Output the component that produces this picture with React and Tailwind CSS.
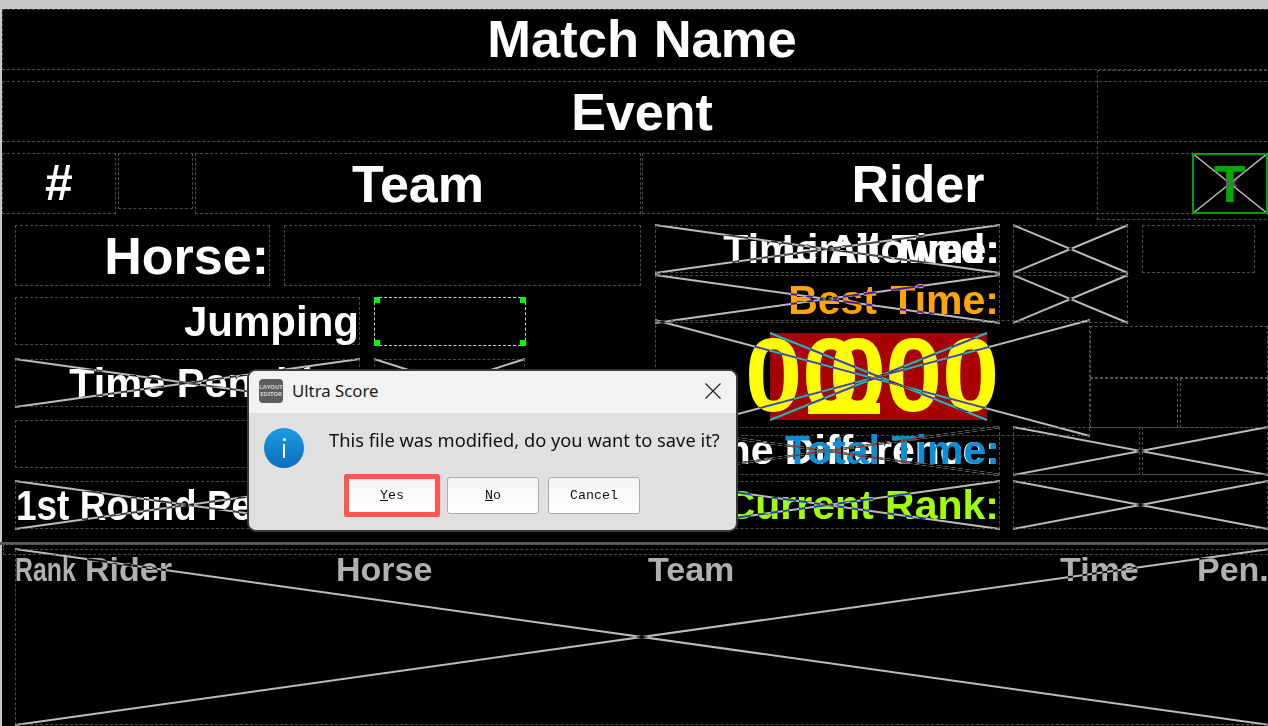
import React from "react";

const B = "font-['Liberation_Sans',Arial,sans-serif] font-bold";

const Cell = ({ className = "", children }) => (
  <div className={`absolute flex items-center whitespace-pre border border-dashed border-[#4a4a4a] ${B} ${className}`}>
    {children}
  </div>
);

const Label = ({ className = "", children }) => (
  <div className={`absolute flex items-center justify-end whitespace-pre ${B} ${className}`}>{children}</div>
);

/* Each diagonal blends on its own, so where the two meet they cancel out, as in an XOR-drawn placeholder. */
const Cross = ({ className = "", stroke = "#bcbcbc", w = 2 }) => (
  <>
    <svg className={`absolute overflow-visible mix-blend-difference ${className}`} aria-hidden="true">
      <line x1="0" y1="0" x2="100%" y2="100%" stroke={stroke} strokeWidth={w} />
    </svg>
    <svg className={`absolute overflow-visible mix-blend-difference ${className}`} aria-hidden="true">
      <line x1="0" y1="100%" x2="100%" y2="0" stroke={stroke} strokeWidth={w} />
    </svg>
  </>
);

const Handle = ({ className = "" }) => <div className={`absolute size-[6px] bg-[#00ff00] ${className}`} />;

const Digit = ({ className = "", children }) => (
  <div className={`absolute top-[317px] text-[103px] leading-[118px] text-[#ffff00] ${B} ${className}`}>{children}</div>
);

const Head = ({ className = "", children }) => (
  <div className={`absolute top-[549px] text-[34px] leading-[40px] text-[#b0b0b0] ${B} ${className}`}>{children}</div>
);

const Btn = ({ className = "", children }) => (
  <button className={`flex items-center justify-center rounded-[3px] border border-[#ababab] bg-gradient-to-b from-[#f4f4f4] to-white text-[13.3px] text-[#111] font-['Liberation_Mono',monospace] ${className}`}>
    {children}
  </button>
);

export default function App() {
  return (
    <div className="relative h-[726px] w-[1268px] overflow-hidden bg-black">
      <div className="h-[9px] w-full bg-[#c8c8c8]" />
      <div className="absolute bottom-0 left-0 top-[9px] w-[2px] bg-[#c8c8c8]" />

      {/* header cells */}
      <Cell className="left-[2px] top-[9px] h-[61px] w-[1280px] justify-center text-[52.5px] text-white">Match Name</Cell>
      <Cell className="left-[2px] top-[81px] h-[61px] w-[1280px] justify-center text-[52px] text-white">Event</Cell>
      <Cell className="left-[1097px] top-[70px] h-[150px] w-[190px]" />
      <Cell className="left-[2px] top-[153px] h-[61px] w-[114px] justify-center text-[50px] text-white">#</Cell>
      <Cell className="left-[118px] top-[153px] h-[56px] w-[75px]" />
      <Cell className="left-[195px] top-[153px] h-[61px] w-[446px] justify-center text-[52px] text-white">Team</Cell>
      <Cell className="left-[642px] top-[153px] h-[61px] w-[552px] justify-center text-[52px] text-white">Rider</Cell>
      <Cross className="left-[1192px] top-[153px] h-[61px] w-[76px]" w={1.5} />
      <div className={`absolute left-[1192px] top-[153px] flex h-[61px] w-[76px] items-center justify-center border-2 border-[#00a000] text-[52px] text-[#00a800] ${B}`}>T</div>
      <svg className="absolute left-[1225px] top-[177px] size-[12px]" viewBox="0 0 12 12" aria-hidden="true">
        <path d="M0.5 2.5 L3 5 L3 7 L0.5 9.5 M11.5 2.5 L9 5 L9 7 L11.5 9.5" stroke="#c81cc8" strokeWidth="1.5" fill="none" />
      </svg>

      {/* left column */}
      <Cell className="left-[15px] top-[225px] h-[61px] w-[255px] justify-end text-[52px] text-white">Horse:</Cell>
      <Cell className="left-[284px] top-[225px] h-[61px] w-[357px]" />
      <Cell className="left-[15px] top-[297px] h-[48px] w-[345px] justify-end text-[42px] text-white">Jumping</Cell>
      <div className="absolute left-[374px] top-[297px] h-[49px] w-[152px] border border-dashed border-[#d0d0d0]">
        <Handle className="-left-px -top-px" />
        <Handle className="-right-px -top-px" />
        <Handle className="-bottom-px -left-px" />
        <Handle className="-bottom-px -right-px" />
      </div>
      <Cell className="left-[15px] top-[359px] h-[48px] w-[345px] justify-end text-[41.5px] text-white">Time Penalties</Cell>
      <Cell className="left-[374px] top-[359px] h-[48px] w-[151px]" />
      <Cell className="left-[15px] top-[420px] h-[48px] w-[345px]" />
      <Cell className="left-[374px] top-[420px] h-[48px] w-[151px]" />
      <Cell className="left-[15px] top-[481px] h-[48px] w-[345px] text-[42px] text-white">
        <span className="origin-left scale-x-[0.88]">1st Round Penalties</span>
      </Cell>

      {/* right column */}
      <Cell className="left-[655px] top-[225px] h-[48px] w-[345px] justify-end pt-[2px] text-[41px] text-white">Time Allowed:</Cell>
      <Label className="left-[655px] top-[225px] h-[48px] w-[345px] pt-[2px] text-[41px] text-white">Limit Time:</Label>
      <Cell className="left-[655px] top-[275px] h-[48px] w-[345px] justify-end pt-[3px] text-[41px] text-[#ffa500] [word-spacing:2px]">Best Time:</Cell>
      <Cell className="left-[1013px] top-[225px] h-[48px] w-[115px]" />
      <Cell className="left-[1013px] top-[275px] h-[48px] w-[115px]" />
      <Cell className="left-[1142px] top-[225px] h-[48px] w-[113px]" />

      {/* timer */}
      <Cell className="left-[655px] top-[320px] h-[116px] w-[435px]" />
      <div className="absolute left-[770px] top-[333px] h-[87px] w-[217px] border border-dashed border-[#5a2020] bg-[#a80000]" />
      <Digit className="left-[745px]">0</Digit>
      <Digit className="left-[802px]">0</Digit>
      <Digit className="left-[829px]">0</Digit>
      <Digit className="left-[885px]">0</Digit>
      <Digit className="left-[942px]">0</Digit>
      <div className="absolute left-[808px] top-[403px] h-[11px] w-[72px] bg-[#ffff00]" />
      <Cell className="left-[1090px] top-[326px] h-[52px] w-[178px] border-[#555]" />
      <Cell className="left-[1090px] top-[378px] h-[50px] w-[88px] border-[#555]" />
      <Cell className="left-[1180px] top-[378px] h-[50px] w-[88px] border-[#555]" />

      <Cell className="left-[655px] top-[427px] h-[48px] w-[345px] justify-end text-[41px] text-white">Time Difference:</Cell>
      <Cross className="left-[655px] top-[427px] h-[48px] w-[345px]" />
      <Label className="left-[655px] top-[427px] h-[48px] w-[345px] text-[41px] text-[#0a8fd6]">Total Time:</Label>
      <Cross className="left-[655px] top-[427px] h-[48px] w-[345px]" />
      <Cell className="left-[1013px] top-[427px] h-[48px] w-[127px] border-b-[#555] [border-bottom-style:solid]" />
      <Cell className="left-[1142px] top-[427px] h-[48px] w-[126px] border-b-[#555] [border-bottom-style:solid]" />
      <Cell className="left-[655px] top-[481px] h-[48px] w-[345px] justify-end pt-[2px] text-[41px] text-[#a2ff00]">Current Rank:</Cell>
      <Cell className="left-[1013px] top-[481px] h-[48px] w-[255px]" />

      {/* table */}
      <div className="absolute left-0 top-[542px] h-[3px] w-full bg-[#5a5a5a]" />
      <Cell className="left-[3px] top-[544px] h-[11px] w-[1280px]" />
      <Cell className="left-[15px] top-[549px] h-[176px] w-[1254px]" />
      <Head className="left-[15px]"><span className="inline-block origin-left scale-x-[0.73]">Rank</span></Head>
      <Head className="left-[85px]">Rider</Head>
      <Head className="left-[336px]">Horse</Head>
      <Head className="left-[648px] text-[33.5px]">Team</Head>
      <Head className="left-[1060px] text-[33.5px]">Time</Head>
      <Head className="left-[1197px]">Pen.</Head>

      {/* placeholder crosses, painted inverted over the text */}
      <Cross className="left-[15px] top-[359px] h-[48px] w-[345px]" />
      <Cross className="left-[374px] top-[359px] h-[48px] w-[151px]" />
      <Cross className="left-[15px] top-[481px] h-[48px] w-[345px]" />
      <Cross className="left-[655px] top-[225px] h-[48px] w-[345px]" />
      <Cross className="left-[655px] top-[275px] h-[48px] w-[345px]" />
      <Cross className="left-[1013px] top-[225px] h-[48px] w-[115px]" />
      <Cross className="left-[1013px] top-[275px] h-[48px] w-[115px]" />
      <Cross className="left-[655px] top-[320px] h-[116px] w-[435px]" />
      <Cross className="left-[770px] top-[333px] h-[87px] w-[217px]" />
      <Cross className="left-[1013px] top-[427px] h-[48px] w-[255px]" />
      <Cross className="left-[655px] top-[481px] h-[48px] w-[345px]" />
      <Cross className="left-[1013px] top-[481px] h-[48px] w-[255px]" />
      <Cross className="left-[15px] top-[549px] h-[176px] w-[1254px]" />

      {/* dialog */}
      <div className="absolute left-[247px] top-[369px] z-10 flex h-[163px] w-[491px] flex-col overflow-hidden rounded-[9px] border-2 border-[#3a3a3a] bg-[#e0e0e0] font-['Noto_Sans',sans-serif]">
        <div className="flex h-[42px] shrink-0 items-center bg-[#f3f2f2] pb-[3px] pl-[10px] pr-[15px]">
          <div className="flex size-[24px] flex-col items-center justify-center rounded-[4px] bg-[#5c5c5c] text-[6px] font-bold leading-[7px] text-[#d0d0d0]">
            <span>LAYOUT</span>
            <span>EDITOR</span>
          </div>
          <span className="ml-[9px] text-[16.8px] text-[#1c1c1c]">Ultra Score</span>
          <svg className="ml-auto size-[16px]" viewBox="0 0 16 16" aria-hidden="true">
            <path d="M0.5 0.5 L15.5 15.5 M15.5 0.5 L0.5 15.5" stroke="#222" strokeWidth="1.2" fill="none" />
          </svg>
        </div>
        <div className="flex items-start pl-[15px] pt-[15px]">
          <div className="flex size-[40px] shrink-0 flex-col items-center justify-center rounded-full bg-gradient-to-b from-[#1e9be3] to-[#0a6ebd]">
            <div className="size-[3px] rounded-full bg-white" />
            <div className="mt-[3px] h-[14px] w-[2px] bg-white" />
          </div>
          <span className="-mt-[1px] ml-[25px] whitespace-nowrap text-[18.3px] leading-[26px] text-[#111]">This file was modified, do you want to save it?</span>
        </div>
        <div className="flex items-center pl-[95px] pt-[6px]">
          <div className="flex h-[43px] w-[96px] rounded-[2px] border-[5px] border-[#ff5555]">
            <Btn className="w-full rounded-none border-0"><span className="underline">Y</span>es</Btn>
          </div>
          <Btn className="ml-[7px] h-[37px] w-[92px]"><span className="underline">N</span>o</Btn>
          <Btn className="ml-[9px] h-[37px] w-[92px]">Cancel</Btn>
        </div>
      </div>
    </div>
  );
}
